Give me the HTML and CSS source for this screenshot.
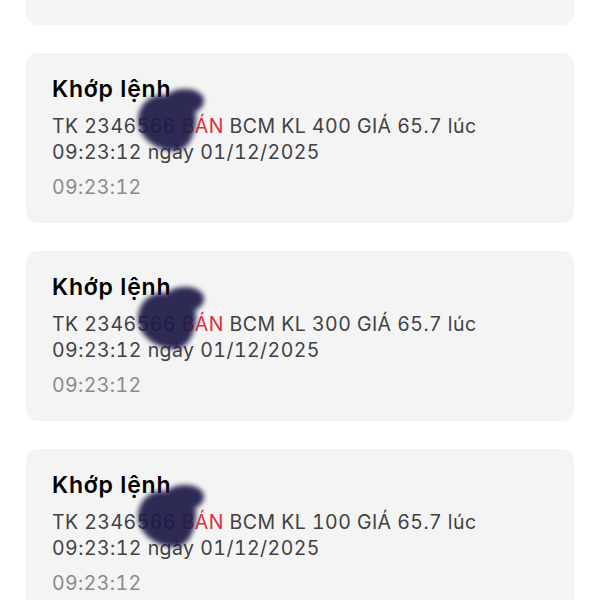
FILE: index.html
```html
<!DOCTYPE html>
<html lang="vi">
<head>
    <meta charset="UTF-8">
    <meta name="viewport" content="width=device-width, initial-scale=1.0">
    <title>Thông báo</title>
    <link rel="stylesheet" href="styles.css">
</head>
<body>
    <div class="list">
        <div class="card">
            <div class="title">Khớp lệnh</div>
            <div class="msg">TK 2346566 <span class="sell">BÁN</span> BCM KL 500 GIÁ 65.7 lúc<br>09:23:12 ngày 01/12/2025</div>
            <div class="time">09:23:12</div>
        </div>
        <div class="card">
            <div class="title">Khớp lệnh</div>
            <div class="msg">TK 2346566 <span class="sell">BÁN</span> BCM KL 400 GIÁ 65.7 lúc<br>09:23:12 ngày 01/12/2025</div>
            <div class="time">09:23:12</div>
            <div class="scribble"></div>
        </div>
        <div class="card">
            <div class="title">Khớp lệnh</div>
            <div class="msg">TK 2346566 <span class="sell">BÁN</span> BCM KL 300 GIÁ 65.7 lúc<br>09:23:12 ngày 01/12/2025</div>
            <div class="time">09:23:12</div>
            <div class="scribble"></div>
        </div>
        <div class="card">
            <div class="title">Khớp lệnh</div>
            <div class="msg">TK 2346566 <span class="sell">BÁN</span> BCM KL 100 GIÁ 65.7 lúc<br>09:23:12 ngày 01/12/2025</div>
            <div class="time">09:23:12</div>
            <div class="scribble"></div>
        </div>
    </div>
</body>
</html>
```

FILE: styles.css
```css
body, html {
    margin: 0;
    height: 100%;
    overflow: hidden;
    background: #ffffff;
    font-family: 'Inter', 'Liberation Sans', sans-serif;
}
.list {
    display: flex;
    flex-direction: column;
    gap: 28px;
    padding: 0 26px;
    margin-top: -145px;
}
.card {
    position: relative;
    height: 170px;
    box-sizing: border-box;
    padding: 22px 26px 0;
    background: #f4f4f4;
    border-radius: 12px;
}
.title {
    font-size: 23px;
    font-weight: 600;
    line-height: 28px;
    letter-spacing: 0.8px;
    color: #000;
}
.msg {
    margin-top: 10px;
    font-size: 19.5px;
    line-height: 26px;
    letter-spacing: 0.45px;
    font-variant-numeric: tabular-nums;
    color: #414141;
}
.sell {
    color: #d8343c;
}
.time {
    margin-top: 9px;
    font-size: 19.5px;
    line-height: 26px;
    letter-spacing: 0.4px;
    font-variant-numeric: tabular-nums;
    color: #8a8a8e;
}
/* vet muc che so tai khoan */
.scribble {
    position: absolute;
    left: 112px;
    top: 42px;
    width: 58px;
    height: 56px;
    background: #1d1947;
    border-radius: 40% 60% 35% 65% / 45% 40% 60% 55%;
    filter: blur(2.5px);
    opacity: 0.92;
}
.scribble::after {
    content: "";
    position: absolute;
    left: 26px;
    top: -6px;
    width: 40px;
    height: 26px;
    background: #1d1947;
    border-radius: 50% 45% 55% 40%;
}
```
